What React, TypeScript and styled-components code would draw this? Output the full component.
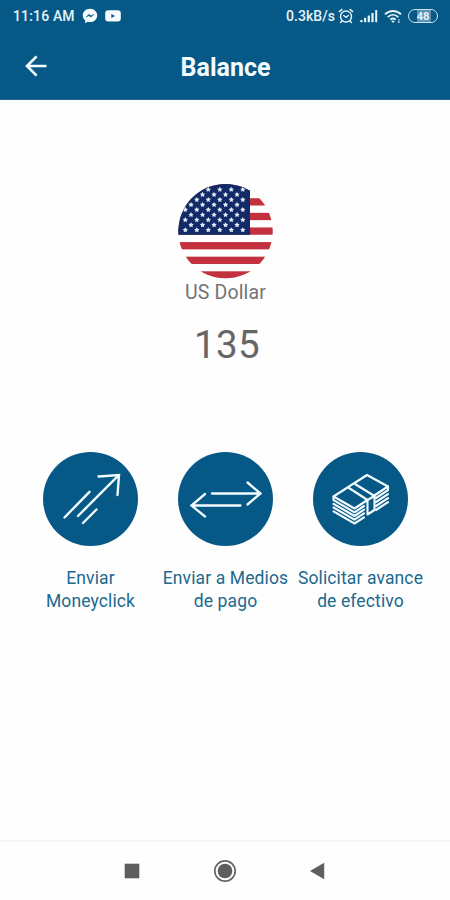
import React from "react";
import styled, { createGlobalStyle } from "styled-components";

const BLUE = "#065986";

const GlobalStyle = createGlobalStyle`
  * { box-sizing: border-box; }
  body { margin: 0; background: #fefefe; font-family: Roboto, sans-serif; }
  svg { display: block; flex: none; }
`;

const Screen = styled.div`
  width: 450px;
  height: 900px;
  display: flex;
  flex-direction: column;
  background: #fefefe;
  overflow: hidden;
`;

const Header = styled.header`
  height: 100px;
  flex: none;
  background: ${BLUE};
  border-bottom: 1px solid #2b6c95;
`;

const StatusBar = styled.div`
  height: 32px;
  display: flex;
  align-items: center;
  justify-content: space-between;
  padding: 0 12px 0 13px;
  color: #e6f3fa;
`;

const StatusGroup = styled.div<{ $gap: number }>`
  display: flex;
  align-items: center;
  gap: ${(p) => p.$gap}px;
`;

const StatusText = styled.span<{ $spacing: number; $tight?: boolean }>`
  font-size: 14px;
  font-weight: 500;
  line-height: 16px;
  letter-spacing: ${(p) => p.$spacing}px;
  margin-right: ${(p) => (p.$tight ? -3 : 0)}px;
  white-space: nowrap;
`;

const TitleBar = styled.div`
  height: 68px;
  display: grid;
  grid-template-columns: 72px 1fr 72px;
  align-items: center;
`;

const BackButton = styled.button`
  border: 0;
  background: none;
  padding: 0 0 1px 25px;
  color: #f4fbff;
`;

const Title = styled.h1`
  margin: 0 0 0 1px;
  padding-top: 4px;
  font-size: 25px;
  line-height: 28px;
  font-weight: 700;
  text-align: center;
  color: #f4fbff;
`;

const Content = styled.main`
  flex: 1;
  display: flex;
  flex-direction: column;
  align-items: center;
  padding-top: 84px;
`;

const Currency = styled.div`
  margin: 2px 0 0 1px;
  font-size: 19.5px;
  line-height: 24px;
  letter-spacing: 0.15px;
  color: #747474;
`;

const Amount = styled.div`
  margin: 16px 0 0 4px;
  font-size: 38.5px;
  line-height: 48px;
  letter-spacing: 0.3px;
  color: #666;
`;

const Actions = styled.div`
  width: 405px;
  margin-top: 83px;
  display: grid;
  grid-template-columns: repeat(3, 135px);
`;

const Action = styled.button`
  border: 0;
  padding: 0;
  background: none;
  font: inherit;
  display: flex;
  flex-direction: column;
  align-items: center;
`;

const Disc = styled.span`
  width: 95px;
  height: 94px;
  border-radius: 50%;
  background: ${BLUE};
  color: #f2fbff;
`;

const Label = styled.span`
  margin: 21px 0 0 1px;
  font-size: 17.5px;
  line-height: 23px;
  letter-spacing: 0.12px;
  color: #20698f;
  white-space: pre;
  text-align: center;
`;

const NavBar = styled.nav`
  height: 60px;
  flex: none;
  border-top: 2px solid #f6f6f6;
  display: flex;
  align-items: center;
  justify-content: center;
  gap: 73px;
  padding-right: 1px;
`;

const STRIPE = 95 / 13;

function starPoints(cx: number, cy: number, r: number) {
  return Array.from({ length: 10 }, (_, i) => {
    const a = -Math.PI / 2 + (i * Math.PI) / 5;
    const d = i % 2 ? r * 0.52 : r;
    return `${cx + d * Math.cos(a)},${cy + d * Math.sin(a)}`;
  }).join(" ");
}

function Flag() {
  const stars: string[] = [];
  for (let row = 0; row < 9; row++) {
    for (let col = 0; col < 6; col++) {
      const x = 7.3 + col * 11.5 + (row % 2 ? 5.75 : 0);
      if (x < 69) stars.push(starPoints(x, 5.6 + row * 5.05, 2.8));
    }
  }
  return (
    <svg width="95" height="95" viewBox="0 0 95 95">
      <clipPath id="round">
        <circle cx="47.5" cy="47.2" r="47.2" />
      </clipPath>
      <g clipPath="url(#round)">
        <rect width="95" height="95" fill="#fff" />
        {[0, 1, 2, 3, 4, 5, 6].map((i) => (
          <rect key={i} y={i * 2 * STRIPE - 0.4} width="95" height={STRIPE} fill="#c3303e" />
        ))}
        <rect width="72" height="50.8" fill="#122b68" />
        {stars.map((s) => (
          <polygon key={s} points={s} fill="#e3eaf7" />
        ))}
      </g>
    </svg>
  );
}

function MessengerIcon() {
  return (
    <svg width="16" height="16" viewBox="0 0 16 16">
      <path d="M8 .8C3.9.8.8 3.700.8 7.400c0 2 .9 3.700 2.400 4.900v2.900l2.500-1.400c.7.2 1.500.3 2.300.3 4.100 0 7.200-3 7.200-6.700S12.100.8 8 .8z" fill="#f5fbff" />
      <path d="M4 9 7 6.300l2 1.500L12 6.300 9 9.200 7 7.700z" fill={BLUE} stroke={BLUE} strokeWidth=".4" />
    </svg>
  );
}

function VideoIcon() {
  return (
    <svg width="16" height="12" viewBox="0 0 16 12">
      <rect x=".2" y=".3" width="15.600" height="11.300" rx="3" fill="#f5fbff" />
      <path d="M6.300 3.900v4.200L10 6z" fill={BLUE} />
    </svg>
  );
}

function AlarmIcon() {
  return (
    <svg width="16" height="16" viewBox="0 0 16 16" fill="none" stroke="currentColor" strokeWidth="1.400" strokeLinecap="round">
      <circle cx="8" cy="8.500" r="5.500" />
      <path d="M1.300 3.600 4 1.400M14.700 3.600 12 1.400M5.700 7.500 8 9.300l2.300-1.800M3.800 13l-1.200 1.500M12.200 13l1.200 1.500" />
    </svg>
  );
}

function SignalIcon() {
  return (
    <svg width="18" height="14" viewBox="0 0 18 14" fill="currentColor">
      <rect x=".3" y="11" width="2.200" height="2.200" />
      <rect x="4" y="8.800" width="2.200" height="4.400" />
      <rect x="7.700" y="6.500" width="2.200" height="6.700" />
      <rect x="11.400" y="4" width="2.200" height="9.200" />
      <rect x="15.200" y="1" width="2" height="12.200" />
    </svg>
  );
}

function WifiIcon() {
  return (
    <svg width="18" height="15" viewBox="0 0 18 15" fill="none" stroke="currentColor" strokeWidth="1.900">
      <path d="M1 5.400c4.600-4.500 11.400-4.500 16 0M3.700 8.100c3.200-3 7.400-3 10.600 0M6.300 10.600c1.700-1.500 3.700-1.500 5.400 0" />
      <path d="M7.200 12.100 9 14l1.800-1.900c-1.200-.8-2.400-.8-3.600 0z" fill="currentColor" stroke="none" />
      <path d="M15 10v4M13.600 12.500 15 14" strokeWidth=".8" />
    </svg>
  );
}

const Battery = styled.span`
  width: 30px;
  height: 14px;
  border: 1.500px solid #cfe2ee;
  border-radius: 7px;
  display: flex;
  align-items: center;
  justify-content: center;
  background: linear-gradient(90deg, transparent 28%, #5b93b4 28%, #5b93b4 80%, transparent 80%);
  font-size: 11px;
  line-height: 11px;
  font-weight: 700;
`;

function BackArrow() {
  return (
    <svg width="22" height="22" viewBox="0 0 22 22" fill="none" stroke="currentColor" strokeWidth="2.700">
      <path d="M21.500 11H2.400M11.600 1.400 2 11l9.600 9.600" />
    </svg>
  );
}

function SendIcon() {
  return (
    <svg width="95" height="95" viewBox="0 0 95 95" fill="none" stroke="currentColor" strokeWidth="2.400" strokeLinecap="round">
      <path d="M21.500 65.500 46.500 39.800M35 64 75.500 23.300M40 71 53.500 57.500" />
      <path d="M55.500 24.500 76 23 74.500 43" />
    </svg>
  );
}

function TransferIcon() {
  return (
    <svg width="95" height="95" viewBox="0 0 95 95" fill="none" stroke="currentColor" strokeWidth="2.300" strokeLinecap="round">
      <path d="M34 41.500H82M69.500 30.500 82.500 41.500 69.500 52.500" />
      <path d="M62.500 53.500H14M27 42 13.500 53.500 27 64.500" />
    </svg>
  );
}

function CashIcon() {
  return (
    <svg width="95" height="95" viewBox="0 0 95 95" fill="none" stroke="currentColor" strokeWidth="2.100" strokeLinejoin="round" strokeLinecap="round">
      <path d="M20.500 44.500 54 23 75 34.500 41.500 56.500Z" />
      <path d="M20.500 44.500v3.700L41.500 60.300 51 54M75 34.500v3.700L63 46" />
      <path d="M20.500 51.800 41.500 64 51 57.700M63 50 75 42.200" />
      <path d="M20.500 55.500 41.500 67.700 51 61.300M63 54 75 46.100" />
      <path d="M20.500 59.400 41.500 71.500 51 65.300M63 58 75 50.200" />
      <path d="M36 36 54.500 48V62.500L61.500 58V44L42 32" fill={BLUE} />
      <path d="M54.500 48 61.500 44" />
    </svg>
  );
}

const actions = [
  { label: "Enviar\nMoneyclick", icon: <SendIcon /> },
  { label: "Enviar a Medios\nde pago", icon: <TransferIcon /> },
  { label: "Solicitar avance\nde efectivo", icon: <CashIcon /> },
];

export default function App() {
  return (
    <Screen>
      <GlobalStyle />
      <Header>
        <StatusBar>
          <StatusGroup $gap={7}>
            <StatusText $spacing={0.15}>11:16 AM</StatusText>
            <MessengerIcon />
            <VideoIcon />
          </StatusGroup>
          <StatusGroup $gap={6}>
            <StatusText $spacing={0.05} $tight>0.3kB/s</StatusText>
            <AlarmIcon />
            <SignalIcon />
            <WifiIcon />
            <Battery>48</Battery>
          </StatusGroup>
        </StatusBar>
        <TitleBar>
          <BackButton aria-label="Volver">
            <BackArrow />
          </BackButton>
          <Title>Balance</Title>
        </TitleBar>
      </Header>
      <Content>
        <Flag />
        <Currency>US Dollar</Currency>
        <Amount>135</Amount>
        <Actions>
          {actions.map((a) => (
            <Action key={a.label}>
              <Disc>{a.icon}</Disc>
              <Label>{a.label}</Label>
            </Action>
          ))}
        </Actions>
      </Content>
      <NavBar>
        <svg width="16" height="16" viewBox="0 0 16 16">
          <rect x=".7" y=".7" width="14.600" height="14.600" fill="#5e5e5e" />
        </svg>
        <svg width="24" height="24" viewBox="0 0 24 24">
          <circle cx="12" cy="12" r="10.200" fill="none" stroke="#666" strokeWidth="1.700" />
          <circle cx="12" cy="12" r="7.300" fill="#5e5e5e" />
        </svg>
        <svg width="16" height="18" viewBox="0 0 16 18">
          <path d="M14.200.8v16.400L0 9z" fill="#5e5e5e" />
        </svg>
      </NavBar>
    </Screen>
  );
}
